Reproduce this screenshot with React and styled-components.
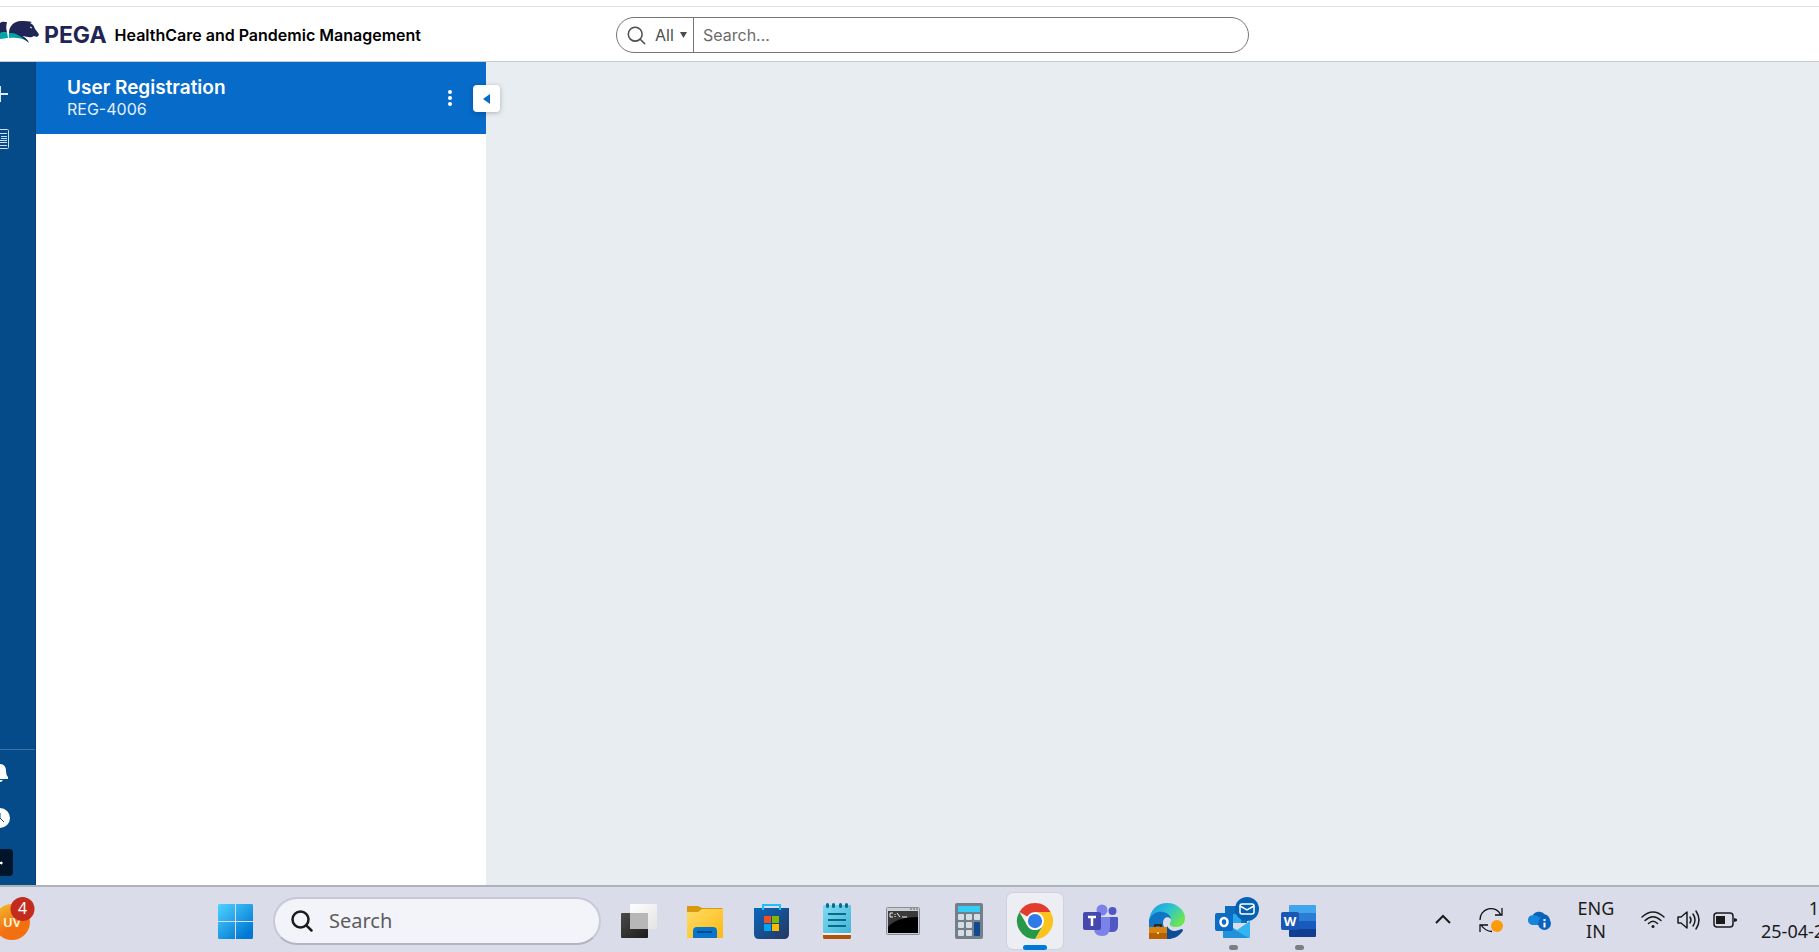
import React from 'react';
import styled, { createGlobalStyle } from 'styled-components';

const GlobalStyle = createGlobalStyle`
  *, *::before, *::after { box-sizing: border-box; }
  html, body { margin: 0; }
  body {
    font-family: Inter, "Liberation Sans", sans-serif;
    font-size: 16px;
    background: #fff;
    overflow: hidden;
  }
  button, input, select { font: inherit; color: inherit; }
  svg { display: block; flex: none; overflow: visible; }
`;

const Page = styled.div`
  display: flex;
  flex-direction: column;
  min-height: 100vh;
  overflow: hidden;
`;

const PlainButton = styled.button`
  display: flex;
  align-items: center;
  justify-content: center;
  flex: none;
  padding: 0;
  border: 0;
  background: none;
  cursor: pointer;
`;

/* ---------- header ---------- */

const TopStrip = styled.div`
  height: 7px;
  border-bottom: 1px solid #e1e1e1;
`;

const Header = styled.header`
  display: grid;
  grid-template-columns: 616px minmax(0, 633px) 1fr;
  align-items: center;
  height: 55px;
  padding-top: 2px;
  border-bottom: 1px solid #c9cbce;
`;

const Brand = styled.a`
  display: flex;
  align-items: center;
  color: #000;
  text-decoration: none;
`;

const BrandName = styled.span`
  margin-left: 4px;
  font-size: 23px;
  line-height: 24px;
  font-weight: 700;
  color: #1f2555;
`;

const AppTitle = styled.h1`
  margin: 0 0 0 8px;
  font-size: 16px;
  line-height: 24px;
  font-weight: 600;
  white-space: nowrap;
`;

const SearchForm = styled.form`
  display: flex;
  height: 36px;
  border: 1px solid #757575;
  border-radius: 18px;
  overflow: hidden;
  color: #4c4c4c;
`;

const Scope = styled.label`
  position: relative;
  display: flex;
  align-items: center;
  gap: 9px;
  width: 77px;
  padding-left: 10px;
  border-right: 1px solid #757575;

  > svg:last-child {
    position: absolute;
    right: 6px;
  }
`;

const ScopeSelect = styled.select`
  width: 40px;
  padding: 0;
  border: 0;
  appearance: none;
  background: none;
  outline: 0;
`;

const SearchInput = styled.input`
  flex: 1;
  min-width: 0;
  padding: 0 9px;
  border: 0;
  outline: 0;
  background: none;

  &::placeholder { color: #6b6b6b; opacity: 1; }
`;

/* ---------- work area ---------- */

const Work = styled.div`
  display: flex;
  flex: 1;
`;

const RailClip = styled.div`
  display: flex;
  justify-content: flex-end;
  flex: none;
  width: 36px;
  overflow: hidden;
`;

const Rail = styled.nav`
  display: flex;
  flex-direction: column;
  justify-content: space-between;
  flex: none;
  width: 72px;
  background: #054a89;
  border-right: 1px solid #04407a;
  color: #fff;
`;

const RailGroup = styled.div`
  display: flex;
  flex-direction: column;
  align-items: center;
  padding-top: ${(p) => (p.$bottom ? '0' : '9px')};
  border-top: ${(p) => (p.$bottom ? '1px solid #3c73a5' : '0')};
`;

const RailButton = styled(PlainButton)`
  width: 46px;
  height: 45px;
`;

const ExpandBadge = styled.span`
  display: flex;
  align-items: center;
  justify-content: center;
  width: 27px;
  height: 27px;
  border-radius: 4px;
  background: #00142a;
`;

const CasePanel = styled.aside`
  flex: none;
  width: 450px;
  background: #fff;
`;

const CaseBanner = styled.div`
  position: relative;
  display: flex;
  align-items: center;
  justify-content: space-between;
  height: 72px;
  padding: 0 26px 0 31px;
  background: #076bc9;
  color: #fff;
`;

const CaseTitle = styled.h2`
  margin: 0;
  font-size: 19px;
  line-height: 22px;
  font-weight: 600;
`;

const CaseId = styled.div`
  font-size: 16px;
  line-height: 20px;
  color: #e4effa;
`;

const MenuButton = styled(PlainButton)`
  width: 20px;
  height: 28px;
`;

const CollapseButton = styled(PlainButton)`
  position: absolute;
  top: 23px;
  right: -14px;
  width: 27px;
  height: 27px;
  border-radius: 4px;
  background: #fff;
  box-shadow: 0 1px 5px rgba(0, 0, 0, 0.25);
`;

const Canvas = styled.main`
  flex: 1;
  background: #e8edf1;
`;

/* ---------- taskbar ---------- */

const Taskbar = styled.footer`
  display: flex;
  align-items: center;
  height: 67px;
  border-top: 2px solid #aeb1b8;
  background: #dadce9;
  color: #1b1b1b;
  font-family: "Noto Sans", "Open Sans", sans-serif;
`;

const WidgetArea = styled.div`
  width: 207px;
`;

const WidgetButton = styled(PlainButton)`
  width: 36px;
  height: 56px;
`;

const TaskList = styled.div`
  display: flex;
  align-items: center;
  gap: 10px;
  margin-top: 3px;
`;

const TaskButton = styled(PlainButton)`
  position: relative;
  width: 56px;
  height: 56px;
  border-radius: 6px;
  background: ${(p) => (p.$active ? '#edeef4' : 'none')};
  box-shadow: ${(p) => (p.$active ? '0 0 0 1px #d0d1dd' : 'none')};

  &::after {
    content: '';
    position: absolute;
    bottom: -1px;
    width: ${(p) => (p.$active ? '24px' : '9px')};
    height: 5px;
    border-radius: 3px;
    background: ${(p) => (p.$active ? '#0078d7' : '#7d7d84')};
    display: ${(p) => (p.$active || p.$open ? 'block' : 'none')};
  }
`;

const TaskSearch = styled.label`
  display: flex;
  align-items: center;
  gap: 16px;
  width: 328px;
  height: 48px;
  padding: 0 16px;
  border: 2px solid #c8c9d8;
  border-bottom-color: #b4b5c2;
  border-radius: 24px;
  background: #f3f4f9;
`;

const TaskSearchInput = styled.input`
  flex: 1;
  min-width: 0;
  padding: 0;
  border: 0;
  outline: 0;
  background: none;
  font-size: 20px;
  line-height: 28px;

  &::placeholder { color: #5c5c5f; opacity: 1; }
`;

const Tray = styled.div`
  display: flex;
  align-items: center;
  margin-left: auto;
`;

const TrayButton = styled(PlainButton)`
  width: ${(p) => p.$width}px;
  height: 56px;
`;

const TrayLines = styled(TrayButton)`
  flex-direction: column;
  font-size: 18px;
  line-height: 23px;
  white-space: nowrap;
`;

const Clock = styled(TrayLines)`
  align-items: flex-start;
  margin-left: 12px;
  overflow: hidden;

  > :first-child { align-self: flex-end; }
`;

/* ---------- drawings ---------- */

const HorseLogo = () => (
  <svg width="40" height="28" viewBox="0 0 40 28" aria-hidden="true">
    <path d="M0 2C2 0 5 1 7 1C6 5 6 8 7 11L0 12Z" fill="#1f2555" />
    <path d="M0 12C3 11 5 11 7 11L8 17C5 17 3 18 0 18ZM9 12C17 11 23 14 28 20C22 17 14 16 9 17Z" fill="#00a6a7" />
    <path d="M9 12C9 5 14 0 21 0C25 0 29 0 32 1L30 2C33 3 34 5 35 8C37 10 39 13 39 14L37 16L34 15L32 16C29 17 26 15 22 15C26 17 28 19 29 22C24 18 20 15 16 13C14 12 12 12 9 12Z" fill="#1f2555" />
    <path d="M30 6L32 7" stroke="#fff" />
  </svg>
);

const Magnifier = ({ size, stroke }) => (
  <svg width={size} height={size} viewBox="0 0 22 22" fill="none" stroke="currentColor" strokeWidth={stroke} strokeLinecap="round" aria-hidden="true">
    <circle cx="9.5" cy="9.5" r="8" />
    <path d="M15.3 15.3L20.5 20.5" />
  </svg>
);

const StartIcon = () => (
  <svg width="35" height="35" viewBox="0 0 35 35" aria-hidden="true">
    <defs>
      <linearGradient id="win" gradientUnits="userSpaceOnUse" x1="0" y1="0" x2="28" y2="32">
        <stop stopColor="#4fd3ff" /><stop offset="1" stopColor="#0078d4" />
      </linearGradient>
    </defs>
    <path d="M1 0h16v17H0V1ZM18 0h16l1 1v16H18ZM0 18h17v17H1l-1-1ZM18 18h17v16l-1 1H18Z" fill="url(#win)" />
  </svg>
);

const TaskViewIcon = () => (
  <svg width="36" height="34" viewBox="0 0 36 34" aria-hidden="true">
    <defs>
      <linearGradient id="tvd" x2="1" y2="1"><stop stopColor="#4a4a48" /><stop offset="1" stopColor="#1c1c1c" /></linearGradient>
      <linearGradient id="tvl" x2="1" y2="1"><stop stopColor="#fff" /><stop offset="1" stopColor="#e3e3e5" /></linearGradient>
    </defs>
    <rect x="9" width="27" height="25" rx="1" fill="url(#tvl)" />
    <rect y="9" width="27" height="25" rx="1" fill="url(#tvd)" />
    <path d="M9 9h18v16H9Z" fill="#b7b7b7" />
  </svg>
);

const FolderIcon = () => (
  <svg width="36" height="33" viewBox="0 0 36 33" aria-hidden="true">
    <defs><linearGradient id="fld" x2="1" y2="1"><stop stopColor="#ffdc65" /><stop offset="1" stopColor="#fbb913" /></linearGradient></defs>
    <path d="M0 1h11l4 2h20l1 2v4H0Z" fill="#d9990c" />
    <path d="M0 7h11l4-3h21v29H0Z" fill="url(#fld)" />
    <path d="M6 33v-7q0-4 4-4h16q4 0 4 4v7Z" fill="#0a73ca" />
    <path d="M10 26h15v2H10Z" fill="#054a91" />
  </svg>
);

const StoreIcon = () => (
  <svg width="35" height="35" viewBox="0 0 35 35" aria-hidden="true">
    <defs><linearGradient id="sto" x2="1" y2="1"><stop stopColor="#0a69bd" /><stop offset="1" stopColor="#25355f" /></linearGradient></defs>
    <path d="M0 4h35v26q0 5-5 5H5q-5 0-5-5Z" fill="url(#sto)" />
    <path d="M9 6V1h17v5" fill="none" stroke="#1ec0f5" strokeWidth="2" />
    <path d="M10 12h7v7h-7Z" fill="#f25022" /><path d="M18 12h7v7h-7Z" fill="#7fba00" />
    <path d="M10 20h7v7h-7Z" fill="#00a4ef" /><path d="M18 20h7v7h-7Z" fill="#ffb900" />
  </svg>
);

const NotepadIcon = () => (
  <svg width="28" height="36" viewBox="0 0 28 36" aria-hidden="true">
    <defs><linearGradient id="npd" x2="1" y2="1"><stop stopColor="#7fdcf0" /><stop offset="1" stopColor="#45b4d6" /></linearGradient></defs>
    <path d="M0 32h28v3l-1 1H1l-1-1Z" fill="#b35309" />
    <path d="M0 29h28v3H0Z" fill="#f5f1ee" />
    <rect y="2" width="28" height="28" rx="1" fill="url(#npd)" />
    <path d="M5 11h18M5 17h18M5 23h18" stroke="#086b8e" strokeWidth="2" />
    <path d="M4.500 1.500v2M10.500 1.500v2M17.500 1.500v2M23.500 1.500v2" stroke="#086b8e" strokeWidth="3" strokeLinecap="round" />
  </svg>
);

const ConsoleIcon = () => (
  <svg width="34" height="28" viewBox="0 0 34 28" aria-hidden="true">
    <rect x="0.500" y="0.500" width="33" height="27" rx="1" fill="#c9ced4" stroke="#8a9096" />
    <path d="M24 2h2M27 2h2M30 2h2" stroke="#5c636b" />
    <path d="M2 4h30v22H2Z" fill="#000" />
    <path d="M2 4h30v6Q10 10 2 20Z" fill="#3a3a3a" />
    <path d="M7 6H4v4h3M9 7v1M9 9v1M11 6l3 4M16 10h5" stroke="#f0f0f0" fill="none" />
  </svg>
);

const CalculatorIcon = () => (
  <svg width="28" height="36" viewBox="0 0 28 36" aria-hidden="true">
    <rect width="28" height="36" rx="2" fill="#73808b" />
    <rect x="3" y="3" width="22" height="6" fill="#35cdf6" />
    {[[3, 11], [11, 11], [19, 11], [3, 19], [11, 19], [3, 27], [11, 27]].map(([x, y]) => (
      <rect key={`${x}-${y}`} x={x} y={y} width="6" height="6" rx="1" fill="#d6dde3" />
    ))}
    <rect x="19" y="19" width="6" height="14" rx="1" fill="#114a8f" />
  </svg>
);

const ChromeIcon = () => (
  <svg width="36" height="36" viewBox="0 0 48 48" aria-hidden="true">
    <path d="M24 24L3.200 12A24 24 0 0 1 44.800 12Z" fill="#e33b2e" />
    <path d="M24 12h20.800A24 24 0 0 1 24 48L34.400 30Z" fill="#fcc31e" />
    <path d="M3.200 12L13.600 30A12 12 0 0 0 34.400 30L24 48A24 24 0 0 1 3.200 12Z" fill="#279847" />
    <circle cx="24" cy="24" r="12" fill="#fff" />
    <circle cx="24" cy="24" r="9.500" fill="#2f7ae9" />
  </svg>
);

const TeamsIcon = () => (
  <svg width="36" height="34" viewBox="0 0 36 34" aria-hidden="true">
    <circle cx="29.500" cy="7" r="4" fill="#4f58c4" />
    <path d="M25 13h9q1 0 1 1v8q0 6-6 6h-4Z" fill="#4f58c4" />
    <circle cx="19" cy="6" r="5.500" fill="#7b83eb" />
    <path d="M11 13h15q1 0 1 1v9q0 9-8 9t-8-8Z" fill="#7b83eb" />
    <rect y="8" width="18" height="18" rx="2" fill="#4549ad" />
    <path d="M5 13h8M9 13v9" stroke="#fff" strokeWidth="2.500" />
  </svg>
);

const EdgeIcon = () => (
  <svg width="36" height="36" viewBox="0 0 36 36" aria-hidden="true">
    <defs>
      <linearGradient id="edg" x2="1" y2="0.600"><stop offset="0.200" stopColor="#22a7df" /><stop offset="0.550" stopColor="#2fc4cf" /><stop offset="1" stopColor="#6be64e" /></linearGradient>
    </defs>
    <path d="M0 18C1 7 8 0 18 0C29 0 36 8 36 15C36 21 32 24 27 24C23 24 20 23 21 20C24 15 20 10 13 10C7 10 3 13 0 18Z" fill="url(#edg)" />
    <path d="M0 24V17C3 10 9 8 14 9C19 10 22 13 22 16C18 12 14 15 14 20C14 26 20 30 27 28C30 27 32 26 33 27C30 33 24 36 18 36Z" fill="#0f75c4" />
    <path d="M18 23C21 29 27 29 33 26Q35 27 33 29C29 34 24 36 18 36Z" fill="#0c4c96" />
    <path d="M6 24v-2h6v2" fill="none" stroke="#3d2a14" strokeWidth="2" />
    <path d="M0 24h18v12H0Z" fill="#b95f06" />
    <path d="M0 24h18v6H0Z" fill="#d98313" />
    <path d="M8 29h2v2H8Z" fill="#ffe25a" />
  </svg>
);

const OutlookIcon = () => (
  <svg width="36" height="36" viewBox="0 0 36 36" aria-hidden="true">
    <path d="M10 3h22v17H10Z" fill="#0f6cbd" />
    <path d="M10 11h8v9h-8Z" fill="#0a4f94" /><path d="M18 11h8v9h-8Z" fill="#28a8ea" />
    <path d="M8 19l14 8 13-9v16q0 1-1 1H9q-1 0-1-1Z" fill="#35b5ef" />
    <path d="M8 20l26 15H9q-1 0-1-1Z" fill="#2291dc" />
    <rect y="10" width="18" height="18" rx="2" fill="#0b6cc5" />
    <ellipse cx="9" cy="19" rx="3.500" ry="4" fill="none" stroke="#fff" strokeWidth="2.500" />
    <circle cx="32" cy="6" r="12" fill="#0561b4" />
    <rect x="25" y="1" width="14" height="10" rx="2" fill="none" stroke="#fff" strokeWidth="1.500" />
    <path d="M25 3l7 4 7-4" fill="none" stroke="#fff" strokeWidth="1.500" />
  </svg>
);

const WordIcon = () => (
  <svg width="36" height="32" viewBox="0 0 36 32" aria-hidden="true">
    <path d="M8 8V1q0-1 1-1h25q1 0 1 1v7Z" fill="#41a5ee" />
    <path d="M8 8h27v8H8Z" fill="#2b7cd3" /><path d="M8 16h27v8H8Z" fill="#185abd" />
    <path d="M8 24h27v7q0 1-1 1H9q-1 0-1-1Z" fill="#103f91" />
    <rect y="7" width="18" height="18" rx="2" fill="#1a56b4" />
    <text x="9" y="21" fontFamily="Noto Sans, sans-serif" fontSize="13" fontWeight="700" textAnchor="middle" fill="#fff">W</text>
  </svg>
);

const WidgetIcon = () => (
  <svg width="36" height="44" viewBox="0 0 36 44" fontFamily="Noto Sans, sans-serif" aria-hidden="true">
    <defs><linearGradient id="uv" x2="0.600" y2="1"><stop stopColor="#f2c230" /><stop offset="0.700" stopColor="#f2700f" /></linearGradient></defs>
    <circle cx="12" cy="24" r="18" fill="url(#uv)" />
    <text x="3" y="29" fontSize="13" fontWeight="600" fill="#fff6dc">UV</text>
    <circle cx="22.500" cy="11" r="12" fill="#c42b1c" />
    <text x="22.500" y="16" fontSize="16" textAnchor="middle" fill="#fff">4</text>
  </svg>
);

const ChevronIcon = () => (
  <svg width="16" height="9" viewBox="0 0 16 9" fill="none" stroke="#1b1b1b" strokeWidth="2" aria-hidden="true"><path d="M1 8l7-7 7 7" /></svg>
);

const SyncIcon = () => (
  <svg width="24" height="24" viewBox="0 0 24 24" fill="none" stroke="#111" strokeWidth="1.300" aria-hidden="true">
    <path d="M1 12A11 11 0 0 1 22 7M23 0v7h-7M13 23.500Q6 23 2 17M1 24v-7h8" />
    <circle cx="18" cy="18" r="6" fill="#ff9a0a" stroke="none" />
  </svg>
);

const CloudIcon = () => (
  <svg width="24" height="20" viewBox="0 0 24 20" aria-hidden="true">
    <path d="M5 7A7.500 7.500 0 0 1 18 4.500Q22 5 23 10L14 12Z" fill="#0b63b8" />
    <path d="M5 15A5 5 0 0 1 4 5.500Q8 4 12 7L19 11L13 15Z" fill="#1785dc" />
    <circle cx="17.500" cy="13.500" r="6.500" fill="#0a63bd" />
    <path d="M17.500 9v2M17.500 12.500v5" stroke="#fff" strokeWidth="2" />
  </svg>
);

const WifiIcon = () => (
  <svg width="24" height="18" viewBox="0 0 24 18" fill="none" stroke="#1b1b1b" strokeWidth="1.500" strokeLinecap="round" aria-hidden="true">
    <path d="M1 6Q12-4 23 6M4 9.500Q12 2 20 9.500M7.500 12.500Q12 8 16.500 12.500" />
    <circle cx="12" cy="15.500" r="1.500" fill="#1b1b1b" stroke="none" />
  </svg>
);

const VolumeIcon = () => (
  <svg width="24" height="20" viewBox="0 0 24 20" fill="none" stroke="#1b1b1b" strokeWidth="1.500" strokeLinejoin="round" strokeLinecap="round" aria-hidden="true">
    <path d="M1 7h3l6-5v16l-6-5H1ZM13 7q2 3 0 6M16 4q4 6 0 12M19 1q6 9 0 18" />
  </svg>
);

const BatteryIcon = () => (
  <svg width="24" height="16" viewBox="0 0 24 16" aria-hidden="true">
    <rect x="1" y="1" width="19" height="14" rx="3" fill="none" stroke="#1b1b1b" strokeWidth="1.500" />
    <path d="M3 4h9v8H3ZM21 6l3 1v2l-3 1Z" fill="#1b1b1b" />
  </svg>
);

const TASKS = [
  { name: 'Task view', Icon: TaskViewIcon },
  { name: 'File Explorer', Icon: FolderIcon },
  { name: 'Microsoft Store', Icon: StoreIcon },
  { name: 'Notepad', Icon: NotepadIcon },
  { name: 'Command Prompt', Icon: ConsoleIcon },
  { name: 'Calculator', Icon: CalculatorIcon },
  { name: 'Chrome', Icon: ChromeIcon, active: true },
  { name: 'Teams', Icon: TeamsIcon },
  { name: 'Edge', Icon: EdgeIcon },
  { name: 'Outlook', Icon: OutlookIcon, open: true },
  { name: 'Word', Icon: WordIcon, open: true },
];

export default function App() {
  return (
    <Page>
      <GlobalStyle />
      <TopStrip />
      <Header>
        <Brand href="#home">
          <HorseLogo />
          <BrandName>PEGA</BrandName>
          <AppTitle>HealthCare and Pandemic Management</AppTitle>
        </Brand>
        <SearchForm role="search" onSubmit={(e) => e.preventDefault()}>
          <Scope>
            <Magnifier size={19} stroke={1.8} />
            <ScopeSelect aria-label="Search scope"><option>All</option></ScopeSelect>
            <svg width="7" height="6" viewBox="0 0 7 6" aria-hidden="true"><path d="M0 0h7L3.500 6Z" fill="#4c4c4c" /></svg>
          </Scope>
          <SearchInput type="text" aria-label="Search" placeholder="Search..." />
        </SearchForm>
      </Header>

      <Work>
        <RailClip>
          <Rail aria-label="Main">
            <RailGroup>
              <RailButton aria-label="Create">
                <svg width="16" height="16" viewBox="0 0 16 16" stroke="#dfe9f3" strokeWidth="2" aria-hidden="true"><path d="M0 8h16M8 0v16" /></svg>
              </RailButton>
              <RailButton aria-label="News">
                <svg width="18" height="20" viewBox="0 0 18 20" fill="none" stroke="#cfdeec" aria-hidden="true">
                  <rect x="0.500" y="0.500" width="17" height="19" rx="1" />
                  <path d="M2 4.500h14M10 7.500h6M10 9.500h6M2 11.500h14M2 13.500h14M2 16.500h14" />
                </svg>
              </RailButton>
            </RailGroup>
            <RailGroup $bottom>
              <RailButton aria-label="Notifications">
                <svg width="16" height="18" viewBox="0 0 16 18" fill="#fff" aria-hidden="true">
                  <path d="M8 0C12 0 14 3 14 7Q14 11 16 13V15H0V13Q2 11 2 7C2 3 4 0 8 0ZM5 16h6q-1 2-3 2t-3-2Z" />
                </svg>
              </RailButton>
              <RailButton aria-label="Recents">
                <svg width="20" height="20" viewBox="0 0 20 20" aria-hidden="true">
                  <circle cx="10" cy="10" r="10" fill="#fff" />
                  <path d="M10 5v5l4 4" fill="none" stroke="#054a89" />
                </svg>
              </RailButton>
              <RailButton aria-label="Expand navigation">
                <ExpandBadge>
                  <svg width="6" height="4" viewBox="0 0 6 4" fill="#fff" aria-hidden="true"><path d="M0 1h4V0l2 2-2 2V3H0Z" /></svg>
                </ExpandBadge>
              </RailButton>
            </RailGroup>
          </Rail>
        </RailClip>

        <CasePanel>
          <CaseBanner>
            <div>
              <CaseTitle>User Registration</CaseTitle>
              <CaseId>REG-4006</CaseId>
            </div>
            <MenuButton aria-label="Actions">
              <svg width="4" height="16" viewBox="0 0 4 16" fill="#fff" aria-hidden="true">
                <circle cx="2" cy="2" r="2" /><circle cx="2" cy="8" r="2" /><circle cx="2" cy="14" r="2" />
              </svg>
            </MenuButton>
            <CollapseButton aria-label="Collapse panel">
              <svg width="7" height="10" viewBox="0 0 7 10" aria-hidden="true"><path d="M7 0v10L0 5Z" fill="#076bc9" /></svg>
            </CollapseButton>
          </CaseBanner>
        </CasePanel>
        <Canvas />
      </Work>

      <Taskbar>
        <WidgetArea>
          <WidgetButton aria-label="Widgets"><WidgetIcon /></WidgetButton>
        </WidgetArea>
        <TaskList>
          <TaskButton aria-label="Start"><StartIcon /></TaskButton>
          <TaskSearch>
            <Magnifier size={22} stroke={2.5} />
            <TaskSearchInput type="text" aria-label="Search" placeholder="Search" />
          </TaskSearch>
          {TASKS.map(({ name, Icon, active, open }) => (
            <TaskButton key={name} aria-label={name} $active={active} $open={open}><Icon /></TaskButton>
          ))}
        </TaskList>
        <Tray>
          <TrayButton $width={48} aria-label="Show hidden icons"><ChevronIcon /></TrayButton>
          <TrayButton $width={48} aria-label="Updates"><SyncIcon /></TrayButton>
          <TrayButton $width={48} aria-label="OneDrive"><CloudIcon /></TrayButton>
          <TrayLines $width={66}><span>ENG</span><span>IN</span></TrayLines>
          <TrayButton $width={48} aria-label="Wi-Fi"><WifiIcon /></TrayButton>
          <TrayButton $width={24} aria-label="Volume"><VolumeIcon /></TrayButton>
          <TrayButton $width={48} aria-label="Battery"><BatteryIcon /></TrayButton>
          <Clock $width={58}><span>1</span><span>25-04-2</span></Clock>
        </Tray>
      </Taskbar>
    </Page>
  );
}
